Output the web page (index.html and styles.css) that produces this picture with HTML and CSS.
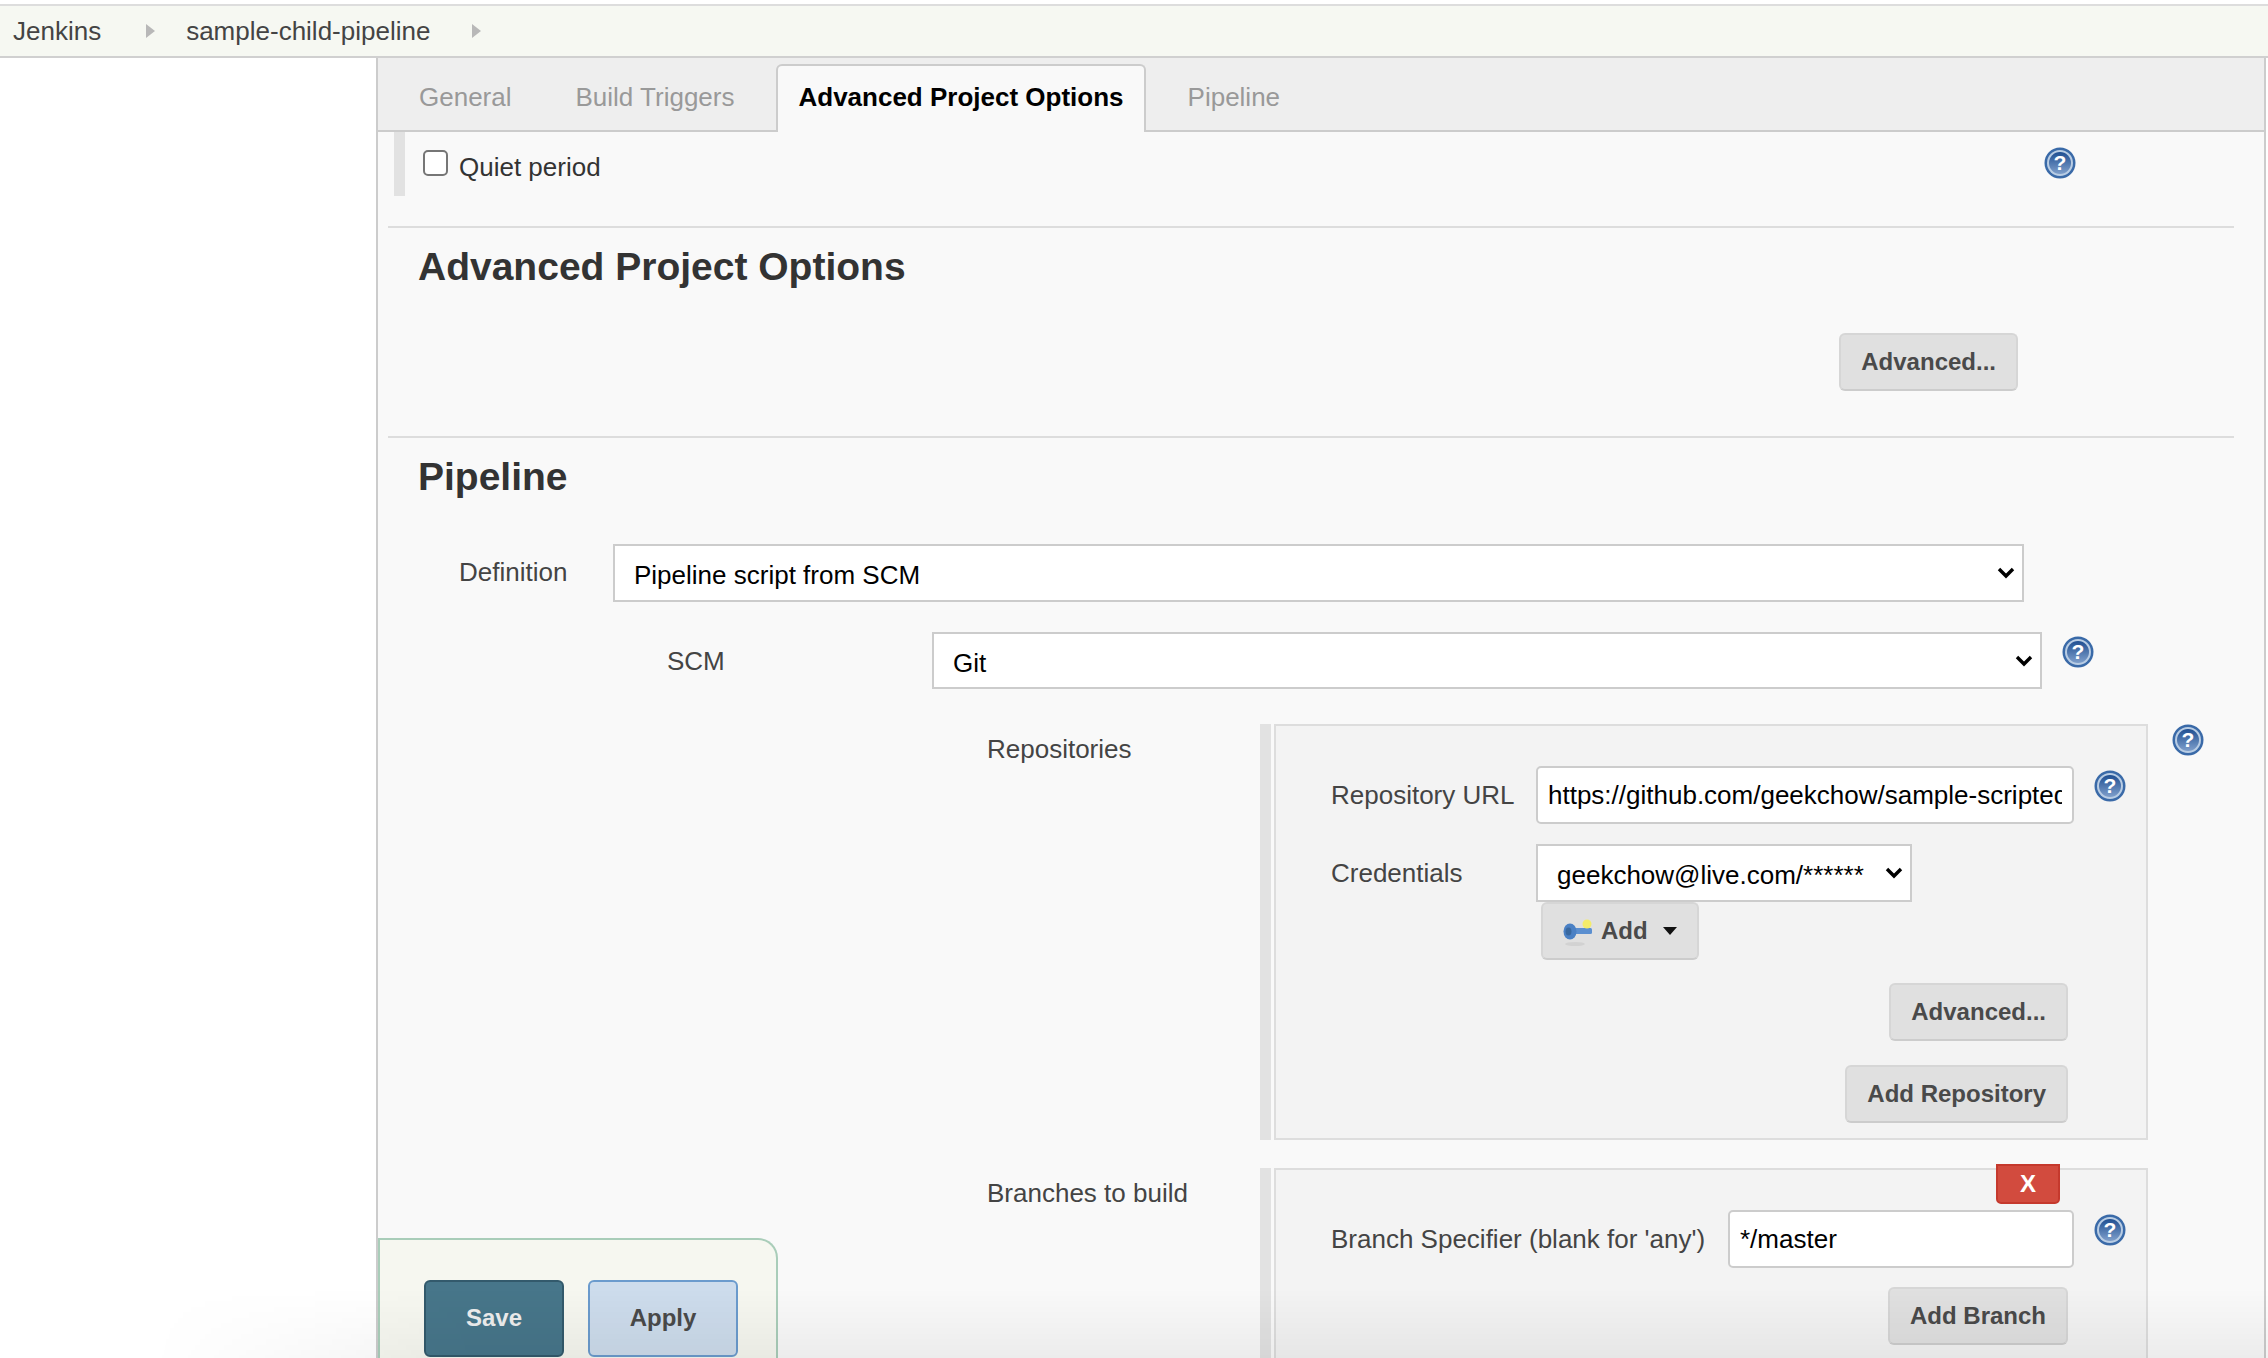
FILE: index.html
```html
<!DOCTYPE html>
<html>
<head>
  <meta charset="UTF-8">
  <meta name="viewport" content="width=device-width,initial-scale=1">
  <title>sample-child-pipeline Config</title>
  <link rel="stylesheet" href="styles.css">
</head>
<body>
  <svg class="defs" width="0" height="0">
    <defs>
      <linearGradient id="helpfill" x1="0" y1="0" x2="0" y2="1">
        <stop offset="0" stop-color="#1f4f92"/>
        <stop offset="1" stop-color="#7f9fcb"/>
      </linearGradient>
      <symbol id="help" viewBox="0 0 32 32">
        <circle cx="16" cy="16" r="15.5" fill="#3a6aa8"/>
        <circle cx="16" cy="16" r="13" fill="#b9cde4"/>
        <circle cx="16" cy="16" r="11" fill="url(#helpfill)"/>
        <text x="16" y="23" text-anchor="middle" class="helpmark">?</text>
      </symbol>
    </defs>
  </svg>

  <div class="breadcrumbs">
    <a class="crumb">Jenkins</a>
    <span class="crumbarrow"></span>
    <a class="crumb">sample-child-pipeline</a>
    <span class="crumbarrow"></span>
  </div>

  <div class="page">
    <div class="sidepanel"></div>

    <div class="mainpanel">
      <div class="tabbar">
        <div class="tab">General</div>
        <div class="tab">Build Triggers</div>
        <div class="tab active">Advanced Project Options</div>
        <div class="tab">Pipeline</div>
      </div>

      <div class="quietrow">
        <label class="quietlabel"><input type="checkbox" class="check"> Quiet period</label>
        <svg class="helpicon"><use href="#help"/></svg>
      </div>

      <div class="section">
        <h2>Advanced Project Options</h2>
        <div class="advancedrow">
          <button class="btn">Advanced...</button>
        </div>
      </div>

      <div class="section pipeline">
        <h2>Pipeline</h2>

        <div class="formrow definitionrow">
          <div class="fieldlabel">Definition</div>
          <select class="field definitionselect"><option>Pipeline script from SCM</option></select>
        </div>

        <div class="formrow scmrow">
          <div class="fieldlabel">SCM</div>
          <select class="field scmselect"><option>Git</option></select>
          <svg class="helpicon"><use href="#help"/></svg>
        </div>

        <div class="formrow blockrow reposrow">
          <div class="fieldlabel">Repositories</div>
          <div class="blockbar"></div>
          <div class="block">
            <div class="formrow">
              <div class="fieldlabel repolabel">Repository URL</div>
              <input class="textfield repourl" type="text" value="https://github.com/geekchow/sample-scripted">
              <svg class="helpicon"><use href="#help"/></svg>
            </div>
            <div class="formrow credrow">
              <div class="fieldlabel repolabel">Credentials</div>
              <select class="field credselect"><option>geekchow@live.com/******</option></select>
            </div>
            <button class="btn addbtn">
              <svg class="keyicon" viewBox="0 0 30 28">
                <ellipse cx="12" cy="25" rx="10" ry="2" fill="#d2d2d2"/>
                <rect x="8" y="9" width="21" height="6" rx="1.5" fill="#5b8fd0"/>
                <ellipse cx="7" cy="12.5" rx="6.5" ry="8" fill="#4a80c4"/>
                <ellipse cx="5.5" cy="12.5" rx="3" ry="4" fill="#39689f"/>
                <circle cx="24" cy="5" r="4.5" fill="#f4ec6a"/>
              </svg>
              Add
              <span class="caret"></span>
            </button>
            <div class="blockbuttons">
              <button class="btn">Advanced...</button>
              <button class="btn">Add Repository</button>
            </div>
          </div>
          <svg class="helpicon blockhelp"><use href="#help"/></svg>
        </div>

        <div class="formrow blockrow branchrow">
          <div class="fieldlabel">Branches to build</div>
          <div class="blockbar"></div>
          <div class="block branchblock">
            <button class="deletebtn">X</button>
            <div class="formrow">
              <div class="fieldlabel branchlabel">Branch Specifier (blank for 'any')</div>
              <input class="textfield branchinput" type="text" value="*/master">
              <svg class="helpicon"><use href="#help"/></svg>
            </div>
            <div class="blockbuttons">
              <button class="btn">Add Branch</button>
            </div>
          </div>
        </div>
      </div>
    </div>
  </div>

  <div class="savebar">
    <button class="savebtn">Save</button>
    <button class="applybtn">Apply</button>
  </div>
  <div class="bottomfade"></div>
</body>
</html>
```

FILE: styles.css
```css
html, body {
  margin: 0;
  height: 1358px;
  overflow: hidden;
}

body {
  position: relative;
  background: #ffffff;
  font-family: "Liberation Sans", Arial, sans-serif;
  font-size: 26px;
  color: #333333;
}

.defs {
  position: absolute;
}

.helpmark {
  font-family: "Liberation Sans", Arial, sans-serif;
  font-size: 21px;
  font-weight: bold;
  fill: #ffffff;
}

/* breadcrumbs */

.breadcrumbs {
  display: flex;
  align-items: center;
  box-sizing: border-box;
  height: 54px;
  margin-top: 4px;
  padding-left: 13px;
  background: #f6f8f2;
  border-top: 2px solid #dddddd;
  border-bottom: 2px solid #d0d0d0;
  color: #444444;
}

.crumbarrow {
  width: 0;
  height: 0;
  margin: 0 31px 0 45px;
  border-left: 9px solid #b8b8b8;
  border-top: 7px solid transparent;
  border-bottom: 7px solid transparent;
}

.crumbarrow:last-child {
  margin-left: 42px;
}

/* page */

.page {
  display: flex;
}

.sidepanel {
  width: 376px;
}

.mainpanel {
  box-sizing: border-box;
  width: 1890px;
  height: 1300px;
  background: #f9f9f9;
  border-left: 2px solid #cccccc;
  border-right: 2px solid #cccccc;
}

/* tabs */

.tabbar {
  display: flex;
  align-items: flex-end;
  gap: 20px;
  box-sizing: border-box;
  height: 74px;
  padding-left: 19px;
  background: #eeeeee;
  border-bottom: 2px solid #cccccc;
}

.tab {
  box-sizing: border-box;
  height: 68px;
  margin-bottom: -2px;
  padding: 0 22px;
  line-height: 66px;
  color: #999999;
}

.tab.active {
  background: #f9f9f9;
  border: 2px solid #cccccc;
  border-bottom: none;
  border-radius: 6px 6px 0 0;
  padding: 0 20px;
  line-height: 62px;
  color: #000000;
  font-weight: bold;
}

/* quiet period */

.quietrow {
  display: flex;
  justify-content: space-between;
  box-sizing: border-box;
  width: 1682px;
  height: 64px;
  margin-left: 16px;
  padding-left: 18px;
  border-left: 11px solid #e2e2e2;
}

.quietlabel {
  display: flex;
  align-items: center;
  height: 60px;
  margin-top: 5px;
  color: #333333;
}

.check {
  appearance: none;
  box-sizing: border-box;
  width: 25px;
  height: 26px;
  margin: -8px 11px 0 0;
  background: #ffffff;
  border: 2px solid #767676;
  border-radius: 5px;
}

.quietrow .helpicon {
  margin-top: 15px;
}

.helpicon {
  flex: none;
  width: 32px;
  height: 32px;
  margin-top: 4px;
  margin-left: 20px;
}

/* sections */

.section {
  margin: 30px 30px 0 10px;
  padding-left: 30px;
  border-top: 2px solid #dddddd;
  height: 210px;
  box-sizing: border-box;
}

.section h2 {
  margin: 17px 0 0 0;
  font-size: 39px;
  line-height: 44px;
  color: #333333;
}

.advancedrow {
  display: flex;
  justify-content: flex-end;
  margin: 44px 216px 0 0;
}

.pipeline {
  margin-top: 0;
  margin-right: 0;
  height: auto;
  border-top: none;
}

.pipeline > .formrow {
  margin-left: -40px;
}

.pipeline::before {
  content: "";
  display: block;
  height: 2px;
  margin: 0 30px 0 -30px;
  background: #dddddd;
}

/* form rows */

.formrow {
  display: flex;
  align-items: flex-start;
}

.fieldlabel {
  flex: none;
  line-height: 58px;
  color: #444444;
}

.pipeline > .definitionrow {
  margin-top: 45px;
  padding-left: 81px;
}

.definitionrow .fieldlabel {
  width: 154px;
  margin-top: -1px;
}

.pipeline > .scmrow {
  margin-top: 30px;
  padding-left: 289px;
}

.scmrow .fieldlabel {
  width: 265px;
  margin-top: 0;
}

.field {
  appearance: none;
  box-sizing: border-box;
  height: 58px;
  padding: 4px 30px 0 19px;
  background: #ffffff url("data:image/svg+xml,%3Csvg xmlns='http://www.w3.org/2000/svg' width='18' height='12'%3E%3Cpath d='M2 2l7 7 7-7' fill='none' stroke='%23000' stroke-width='3.4'/%3E%3C/svg%3E") no-repeat right 7px center;
  border: 2px solid #cccccc;
  border-radius: 0;
  font-family: "Liberation Sans", Arial, sans-serif;
  font-size: 26px;
  color: #000000;
}

.definitionselect {
  width: 1411px;
}

.scmselect {
  width: 1110px;
  height: 57px;
}

.pipeline > .reposrow {
  margin-top: 34px;
}

.pipeline > .blockrow {
  padding-left: 609px;
}

.blockrow > .fieldlabel {
  width: 273px;
  line-height: 50px;
}

.blockbar {
  flex: none;
  align-self: stretch;
  width: 11px;
  margin-right: 3px;
  background: #e2e2e2;
}

.block {
  position: relative;
  flex: none;
  box-sizing: border-box;
  width: 874px;
  padding: 40px 0 15px 55px;
  background: #f3f3f3;
  border: 2px solid #dddddd;
}

.blockhelp {
  margin-top: 0;
  margin-left: 24px;
}

.repolabel {
  width: 205px;
}

.textfield {
  box-sizing: border-box;
  height: 58px;
  padding: 0 10px;
  background: #ffffff;
  border: 2px solid #cccccc;
  border-radius: 5px;
  font-family: "Liberation Sans", Arial, sans-serif;
  font-size: 26px;
  color: #000000;
  outline: none;
}

.repourl {
  width: 538px;
}

.credrow {
  margin-top: 20px;
}

.credselect {
  width: 376px;
  padding-left: 19px;
}

.addbtn {
  display: flex;
  align-items: center;
  height: 57px;
  margin-left: 210px;
  padding: 0 18px 0 20px;
}

.keyicon {
  width: 30px;
  height: 28px;
  margin: 4px 8px 0 0;
  filter: blur(0.5px);
}

.caret {
  width: 0;
  height: 0;
  margin-left: 15px;
  border-top: 8px solid #111111;
  border-left: 7px solid transparent;
  border-right: 7px solid transparent;
}

.blockbuttons {
  display: flex;
  flex-direction: column;
  align-items: flex-end;
  gap: 24px;
  margin: 23px 78px 0 0;
}

.pipeline > .branchrow {
  margin-top: 28px;
}

.branchblock {
  height: 240px;
}

.branchlabel {
  width: 397px;
}

.branchinput {
  width: 346px;
}

.branchblock .blockbuttons {
  margin-top: 19px;
}

.deletebtn {
  position: absolute;
  top: -6px;
  right: 86px;
  width: 64px;
  height: 40px;
  padding: 0;
  background: #d24b3e;
  border: 2px solid #c5392d;
  border-radius: 0 0 5px 5px;
  font-family: "Liberation Sans", Arial, sans-serif;
  font-size: 24px;
  font-weight: bold;
  color: #ffffff;
}

/* buttons */

.btn {
  box-sizing: border-box;
  height: 58px;
  padding: 0 20px;
  background: #e0e0e0;
  border: 2px solid #d6d6d6;
  border-bottom-color: #cccccc;
  border-radius: 6px;
  font-family: "Liberation Sans", Arial, sans-serif;
  font-size: 24px;
  font-weight: bold;
  color: #4a4a4a;
}

/* save bar */

.savebar {
  position: absolute;
  left: 378px;
  top: 1238px;
  display: flex;
  gap: 24px;
  box-sizing: border-box;
  width: 400px;
  height: 120px;
  padding: 40px 0 0 44px;
  background: #f6f7f0;
  border: 2px solid #a9cdb9;
  border-bottom: none;
  border-radius: 0 20px 0 0;
}

.savebtn, .applybtn {
  box-sizing: border-box;
  height: 77px;
  padding: 0 0 2px 0;
  border-radius: 6px;
  font-family: "Liberation Sans", Arial, sans-serif;
  font-size: 24px;
  font-weight: bold;
}

.savebtn {
  width: 140px;
  background: #47768a;
  border: 2px solid #335a6c;
  color: #eeeeee;
}

.applybtn {
  width: 150px;
  background: #cddcec;
  border: 2px solid #6b9bcd;
  color: #4a4a4a;
}

.bottomfade {
  position: absolute;
  left: 0;
  right: 0;
  bottom: 0;
  height: 70px;
  background: linear-gradient(rgba(0, 0, 0, 0), rgba(0, 0, 0, 0.05));
  -webkit-mask-image: linear-gradient(to right, transparent 150px, black 480px);
  mask-image: linear-gradient(to right, transparent 150px, black 480px);
  pointer-events: none;
}
```
